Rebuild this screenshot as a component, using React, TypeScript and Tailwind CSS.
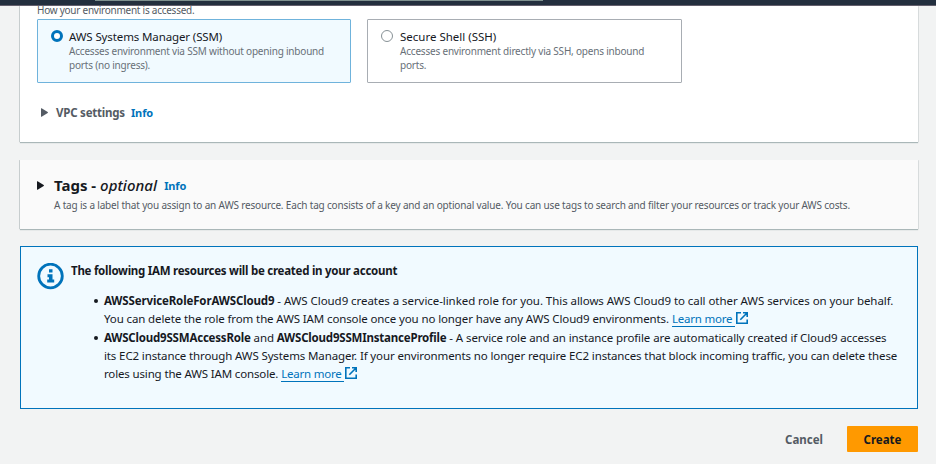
import React from 'react';

function ExternalIcon() {
  return (
    <svg className="mb-[2px] inline-block h-3 w-3 shrink-0" viewBox="0 0 12 12" fill="none" stroke="#0073bb" strokeWidth="1.6">
      <path d="M5 .8H.8v10.4h10.4V7.5M7 .8h4.2V5M11 1L4.3 7.7" />
    </svg>
  );
}

function LearnMore() {
  return (
    <a className="ml-[3px] inline-flex items-center gap-px text-[#0073bb]">
      <span className="h-4 w-[63px] whitespace-pre border-b border-[#0073bb] leading-4 tracking-[-0.22px]">Learn more </span>
      <ExternalIcon />
    </a>
  );
}

function Caret({ className }: { className: string }) {
  return (
    <svg className={className} viewBox="0 0 7 9" fill="currentColor">
      <path d="M0 .6Q0 0 .6.3L6.7 4Q7.2 4.5 6.7 5L.6 8.7Q0 9 0 8.4Z" />
    </svg>
  );
}

export default function App() {
  return (
    <div className="flex h-[464px] w-[936px] flex-col overflow-hidden whitespace-nowrap bg-[#f2f3f3] font-['Noto_Sans',sans-serif] text-[11.5px] text-[#16191f]">
      <header className="z-10 h-1.5 shrink-0 border-b border-[#635f6c] bg-[#232f3e]">
        <div className="ml-[95px] h-px w-[448px] bg-[#7f918f]" />
      </header>

      <main className="ml-5 flex w-[898px] flex-col">
        <section className="h-[136px] bg-white px-[17px] shadow-[0_1px_1px_0_#aab7b8,1px_0_0_0_#e0e3e4,-1px_0_0_0_#cdd2d3]">
          <p className="-mt-1 h-[17px] text-[10px] leading-4 tracking-[-0.25px] text-[#545b64]">How your environment is accessed.</p>
          <div className="flex gap-4">
            <div className="flex h-16 w-[314px] rounded-[1px] border border-[#6fb3dc] bg-[#f1faff] pl-[13px] pt-[9px]">
              <span className="mt-[1px] h-3 w-3 rounded-full border-[3.5px] border-[#0073bb] bg-white" />
              <div className="ml-[6px]">
                <p className="leading-4 tracking-[-0.12px]">AWS Systems Manager (SSM)</p>
                <p className="text-[10px] leading-[13.5px] tracking-[-0.2px] text-[#687078]">Accesses environment via SSM without opening inbound<br />ports (no ingress).</p>
              </div>
            </div>
            <div className="flex h-16 w-[315px] rounded-[1px] border border-[#a8adb3] bg-white pl-[13px] pt-[9px]">
              <span className="mt-[1px] h-3 w-3 rounded-full border border-[#879196] bg-white" />
              <div className="ml-[7px]">
                <p className="leading-4">Secure Shell (SSH)</p>
                <p className="text-[10px] leading-[13.5px] tracking-[-0.2px] text-[#687078]">Accesses environment directly via SSH, opens inbound<br />ports.</p>
              </div>
            </div>
          </div>
          <div className="mt-[22px] flex h-4 items-center pl-1 font-bold leading-4 text-[#545b64]">
            <Caret className="mb-px h-[9px] w-[7px]" />
            <span className="ml-2 tracking-[-0.22px]">VPC settings</span>
            <span className="ml-[6px] text-[11px] tracking-[-0.1px] text-[#0073bb]">Info</span>
          </div>
        </section>

        <section className="mt-[18px] h-[69px] bg-[#fafafa] px-[17px] pt-[15px] shadow-[0_1px_1px_0_#aab7b8,1px_0_0_0_#e0e3e4,-1px_0_0_0_#cdd2d3]">
          <div className="flex h-5 items-center">
            <Caret className="h-[9px] w-[7px]" />
            <h2 className="ml-[10px] text-[15px] font-bold leading-5">Tags - <span className="font-medium italic tracking-[0.05px]">optional</span></h2>
            <span className="ml-[7px] mt-[2px] text-[11px] font-bold tracking-[-0.1px] text-[#0073bb]">Info</span>
          </div>
          <p className="ml-[17px] mt-[2px] text-[10px] leading-4 tracking-[-0.17px] text-[#545b64]">A tag is a label that you assign to an AWS resource. Each tag consists of a key and an optional value. You can use tags to search and filter your resources or track your AWS costs.</p>
        </section>

        <section className="mt-[17px] flex h-[163px] border border-[#0073bb] bg-[#f1faff] pl-4 pt-4">
          <svg className="h-[27px] w-[27px] shrink-0" viewBox="0 0 27 27" fill="#0073bb">
            <circle cx="13.5" cy="13" r="11.8" fill="none" stroke="#0073bb" strokeWidth="2.8" />
            <path d="M12 6.3h3.5v3.2H12zM10.5 11.3h5V16.5h1.7v3h-7v-3H12v-2.3h-1.5z" />
          </svg>
          <div className="ml-[7px]">
            <h3 className="font-bold leading-4 tracking-[-0.26px]">The following IAM resources will be created in your account</h3>
            <ul className="mt-[13px] pl-[33px] leading-[18.3px]">
              <li className="relative before:absolute before:-left-[10px] before:top-[7px] before:h-1 before:w-1 before:rounded-full before:bg-[#16191f]">
                <p className="tracking-[-0.06px]"><b className="tracking-[-0.14px]">AWSServiceRoleForAWSCloud9</b> - AWS Cloud9 creates a service-linked role for you. This allows AWS Cloud9 to call other AWS services on your behalf.</p>
                <p className="flex items-center"><span className="tracking-[-0.118px]">You can delete the role from the AWS IAM console once you no longer have any AWS Cloud9 environments.</span><LearnMore /></p>
              </li>
              <li className="relative before:absolute before:-left-[10px] before:top-[7px] before:h-1 before:w-1 before:rounded-full before:bg-[#16191f]">
                <p className="tracking-[-0.1px]"><b className="tracking-[-0.2px]">AWSCloud9SSMAccessRole</b> and <b className="tracking-[-0.2px]">AWSCloud9SSMInstanceProfile</b> - A service role and an instance profile are automatically created if Cloud9 accesses</p>
                <p className="tracking-[-0.124px]">its EC2 instance through AWS Systems Manager. If your environments no longer require EC2 instances that block incoming traffic, you can delete these</p>
                <p className="flex items-center"><span className="tracking-[-0.15px]">roles using the AWS IAM console.</span><LearnMore /></p>
              </li>
            </ul>
          </div>
        </section>

        <div className="mt-[17px] flex items-center justify-end gap-6 font-bold">
          <button className="pt-px text-[#545b64]">Cancel</button>
          <button className="h-[26px] w-[71px] rounded-[1px] bg-[#ff9900] pt-px text-[#16191f]">Create</button>
        </div>
      </main>
    </div>
  );
}
